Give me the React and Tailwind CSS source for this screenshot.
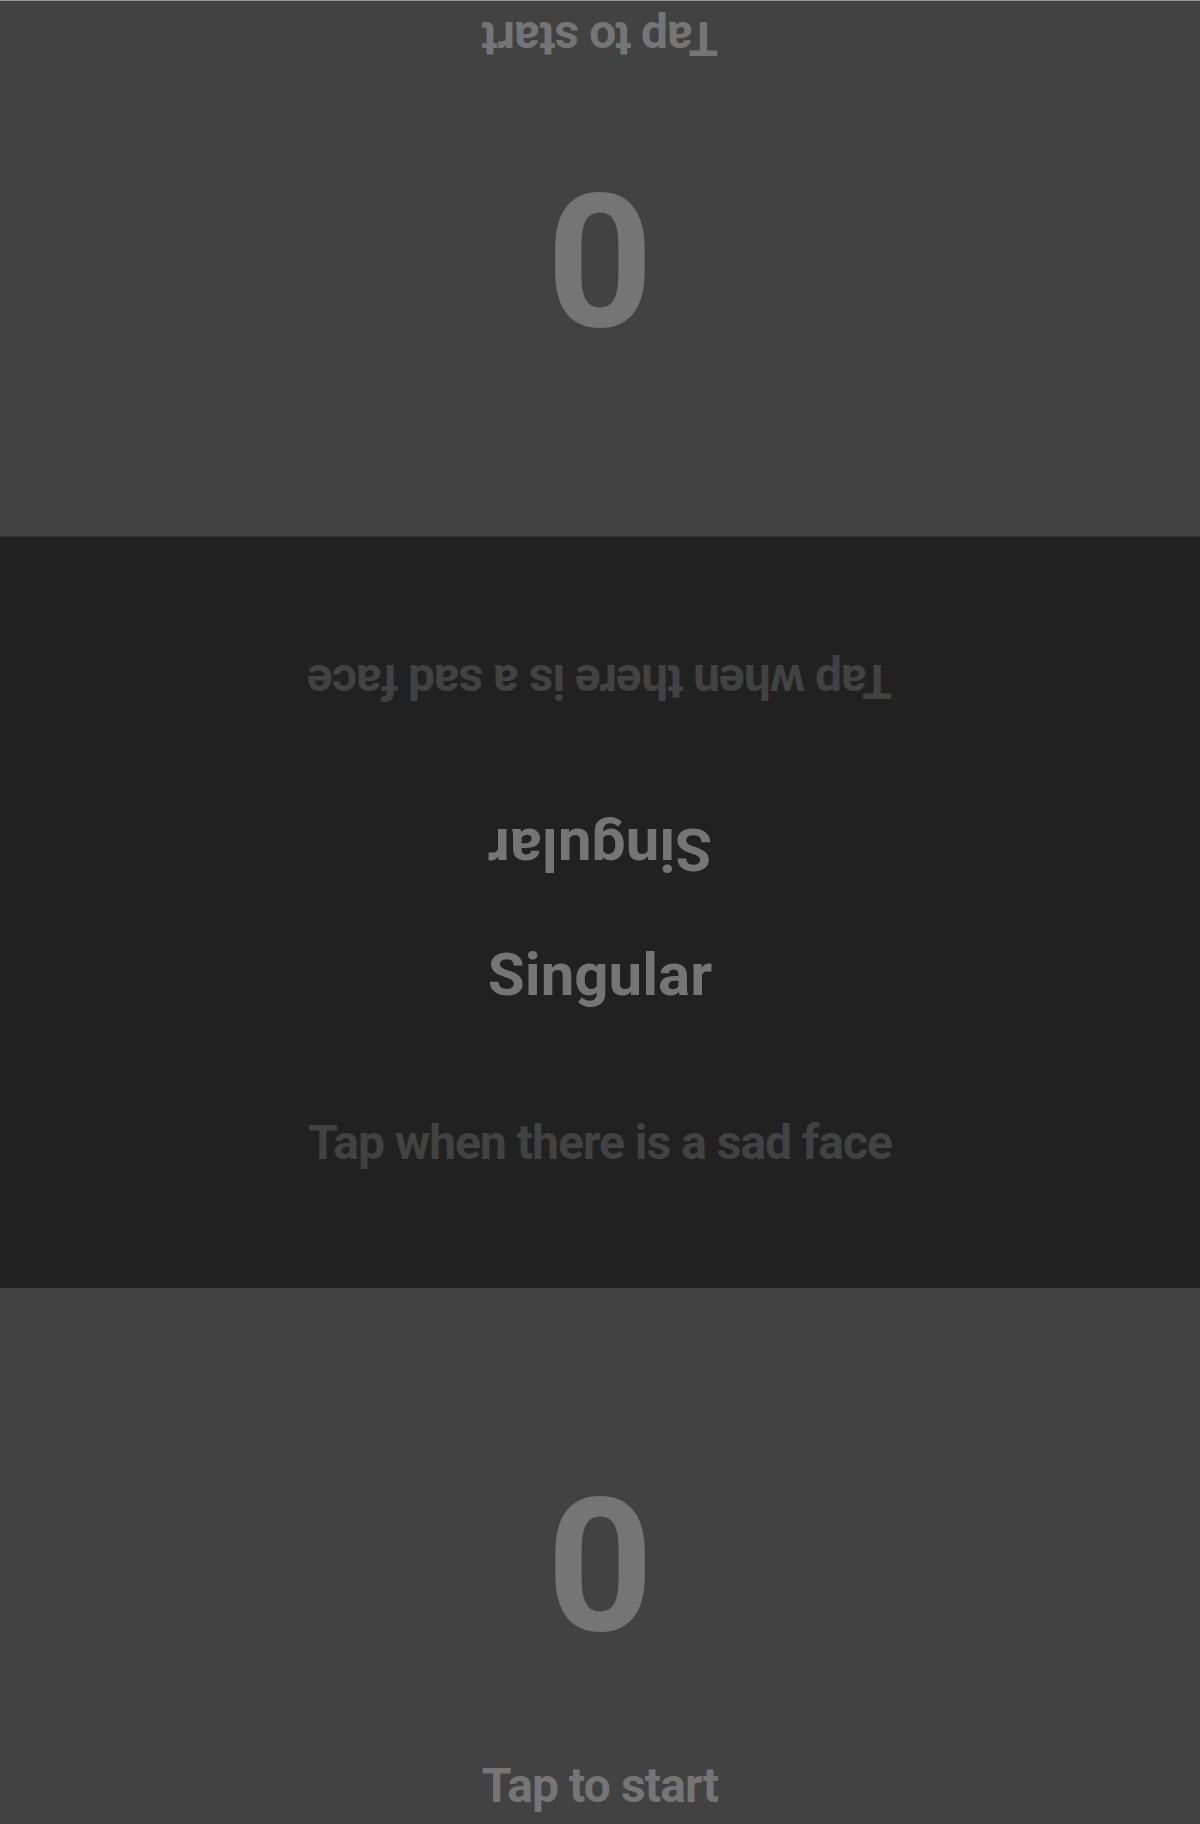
export default function App() {
  return (
    <div className="h-[1824px] w-full flex flex-col font-['Roboto','Noto_Sans',sans-serif] font-bold overflow-hidden">
      <ScorePanel rotated />
      <div className="flex-[7] min-h-0 bg-[#212121] flex flex-col">
        <Half rotated />
        <Half />
      </div>
      <ScorePanel />
    </div>
  );
}

function ScorePanel({ rotated }) {
  return (
    <div className={"flex-[5] min-h-0 bg-[#424242] flex flex-col items-center " + (rotated ? "rotate-180" : "")}>
      <div className="mt-[185px] text-[186px] leading-none text-[#757575]">0</div>
      <div className="mt-[103px] text-[48px] leading-none text-[#757575] tracking-[-0.9px]">Tap to start</div>
    </div>
  );
}

function Half({ rotated }) {
  return (
    <div className={"flex-1 min-h-0 flex flex-col items-center " + (rotated ? "rotate-180" : "")}>
      <div className="mt-[33px] text-[60px] leading-none text-[#757575]">Singular</div>
      <div className="mt-[114px] text-[48px] leading-none text-[#424242] tracking-[-1px]">Tap when there is a sad face</div>
    </div>
  );
}
